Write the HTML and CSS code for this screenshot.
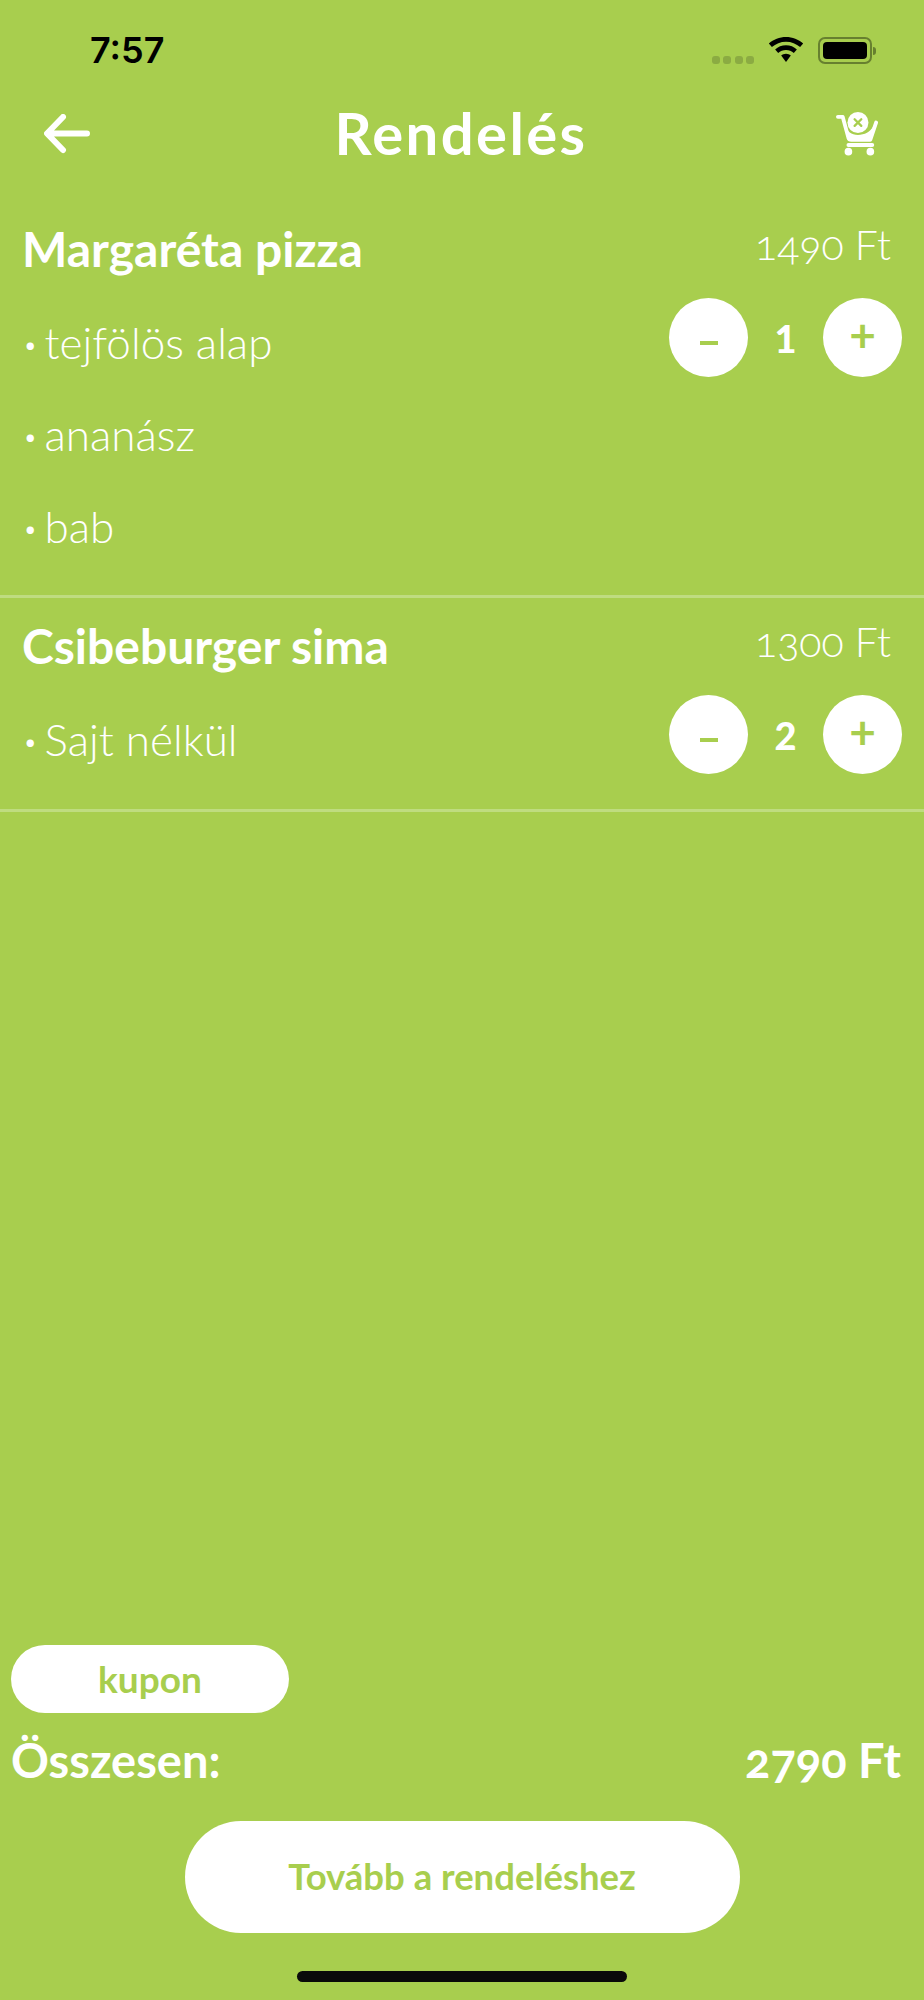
FILE: index.html
```html
<!DOCTYPE html>
<html lang="hu">
<head>
<meta charset="utf-8">
<title>Rendelés</title>
<link rel="stylesheet" href="styles.css">
</head>
<body>
<div class="app">
  <div class="status">
    <span class="time">7:57</span>
    <div class="status-right">
      <div class="signal"><i></i><i></i><i></i><i></i></div>
      <svg class="wifi" width="36" height="26" viewBox="0 0 38 28"><path d="M19 0C12 0 5.500 2.600 0.500 7L3.800 10.800C7.900 7.200 13.200 5 19 5C24.800 5 30.100 7.200 34.200 10.800L37.500 7C32.500 2.600 26 0 19 0Z"/><path d="M19 9C14.500 9 10.400 10.700 7.300 13.500L10.600 17.200C12.800 15.200 15.800 14 19 14C22.200 14 25.200 15.200 27.400 17.200L30.700 13.500C27.600 10.700 23.500 9 19 9Z"/><path d="M19 18C17 18 15.200 18.800 13.800 20L19 27L24.200 20C22.800 18.800 21 18 19 18Z"/></svg>
      <div class="battery"><div class="battery-fill"></div></div>
      <div class="battery-cap"></div>
    </div>
  </div>
  <header class="nav">
    <svg class="back" width="46" height="40" viewBox="0 0 46 40"><path d="M19 3L3 19.500L19 36M4 19.500H43" fill="none" stroke="#fff" stroke-width="6" stroke-linecap="round" stroke-linejoin="round"/></svg>
    <h1 class="title">Rendelés</h1>
    <svg class="cart" width="42" height="46" viewBox="0 0 44 46"><path d="M2 5H7L13 27C13.500 28.500 14.500 29 16 29H36L42 11" fill="none" stroke="#fff" stroke-width="4" stroke-linecap="round" stroke-linejoin="round"/><path d="M9 14L13 30H35L39 15C36 21 30 24 23 24C16 24 12 20 9 14Z" fill="#fff"/><path d="M13 34.500H38" stroke="#fff" stroke-width="4" stroke-linecap="round"/><circle cx="23" cy="11" r="11" fill="#fff"/><path d="M19.500 7.500L26.500 14.500M26.500 7.500L19.500 14.500" stroke="#a8ce4e" stroke-width="2.400" stroke-linecap="round"/><circle cx="13" cy="41.500" r="4" fill="#fff"/><circle cx="36" cy="41.500" r="4" fill="#fff"/></svg>
  </header>
  <main class="list">
    <section class="item item-first">
      <div class="item-text">
        <h2 class="name">Margaréta pizza</h2>
        <p class="option"><span class="dot">•</span>tejfölös alap</p>
        <p class="option"><span class="dot">•</span>ananász</p>
        <p class="option"><span class="dot">•</span>bab</p>
      </div>
      <div class="item-side">
        <div class="price">1490 Ft</div>
        <div class="stepper">
          <button class="step"><span class="minus"></span></button>
          <span class="count">1</span>
          <button class="step"><span class="plus">+</span></button>
        </div>
      </div>
    </section>
    <section class="item item-second">
      <div class="item-text">
        <h2 class="name">Csibeburger sima</h2>
        <p class="option"><span class="dot">•</span>Sajt nélkül</p>
      </div>
      <div class="item-side">
        <div class="price">1300 Ft</div>
        <div class="stepper">
          <button class="step"><span class="minus"></span></button>
          <span class="count">2</span>
          <button class="step"><span class="plus">+</span></button>
        </div>
      </div>
    </section>
  </main>
  <footer class="foot">
    <button class="coupon">kupon</button>
    <div class="total"><span>Összesen:</span><span>2790 Ft</span></div>
    <button class="cta">Tovább a rendeléshez</button>
    <div class="home"></div>
  </footer>
</div>
</body>
</html>
```

FILE: styles.css
```css
* { box-sizing: border-box; }
html, body { margin: 0; padding: 0; }
body { background: #a8ce4e; font-family: "Lato", "Open Sans", sans-serif; color: #fff; font-variant-numeric: oldstyle-nums; }
h1, h2, p { margin: 0; }
button { border: 0; padding: 0; background: #fff; color: #a8ce4e; font-family: inherit; }
.app { height: 2000px; display: flex; flex-direction: column; overflow: hidden; }

.status { height: 82px; display: flex; justify-content: space-between; padding: 29px 0 0 90px; }
.time { font-family: "Inter", sans-serif; font-variant-numeric: normal; font-size: 36px; line-height: 42px; font-weight: 600; color: #000; }
.status-right { display: flex; align-items: flex-start; padding: 8px 48px 0 0; }
.signal { display: flex; gap: 3.500px; margin: 19px 14px 0 0; }
.signal i { width: 8px; height: 8px; border-radius: 3px; background: #8bab42; }
.wifi { fill: #000; margin: 0 14px 0 0; }
.battery { width: 54px; height: 27px; padding: 3px; border: 2px solid #67802f; border-radius: 7px; }
.battery-fill { height: 100%; background: #000; border-radius: 4px; }
.battery-cap { width: 3px; height: 8px; margin: 10px 0 0 1px; background: #67802f; border-radius: 0 3px 3px 0; }

.nav { height: 104px; margin-bottom: 14px; display: flex; align-items: center; justify-content: space-between; padding: 0 46px 0 44px; }
.back { display: block; }
.title { font-size: 58px; line-height: 68px; padding-bottom: 2px; font-weight: 700; letter-spacing: 2.400px; margin-right: 4px; }
.cart { display: block; }

.list { flex: 1; }
.item { display: flex; justify-content: space-between; padding: 3px 22px 0 22px; border-bottom: 3px solid #bfdc80; }
.item-first { height: 398px; }
.item-second { height: 214px; padding-top: 2px; }
.name { font-size: 48px; line-height: 92px; font-weight: 700; margin-bottom: 1px; }
.option { font-size: 44px; line-height: 92px; font-weight: 300; }
.dot { font-size: 25px; line-height: 0; margin: 0 7px 0 1px; vertical-align: 5px; }
.item-side { display: flex; flex-direction: column; align-items: flex-end; }
.price { font-size: 41px; line-height: 84px; font-weight: 300; padding-right: 11px; }
.stepper { display: flex; align-items: center; margin-top: 11px; }
.step { width: 79px; height: 79px; border-radius: 50%; display: flex; align-items: center; justify-content: center; }
.count { width: 75px; text-align: center; font-size: 38px; font-weight: 900; font-variant-numeric: lining-nums; }
.minus { width: 18px; height: 4px; background: #a8ce4e; margin-top: 10px; }
.plus { font-size: 46px; line-height: 44px; margin-top: -6px; font-weight: 700; }

.foot { display: flex; flex-direction: column; padding: 0 23px 18px 11px; }
.coupon { width: 278px; height: 68px; padding-bottom: 2px; border-radius: 34px; font-size: 37px; font-weight: 700; }
.total { display: flex; justify-content: space-between; margin-top: 3px; font-size: 47px; line-height: 88px; font-weight: 700; }
.cta { align-self: center; width: 555px; height: 112px; padding-bottom: 3px; margin: 17px 0 0 12px; border-radius: 56px; font-size: 36.500px; font-weight: 700; }
.home { align-self: center; width: 330px; height: 11px; margin: 38px 0 0 12px; border-radius: 6px; background: #0a0a0a; }
```
